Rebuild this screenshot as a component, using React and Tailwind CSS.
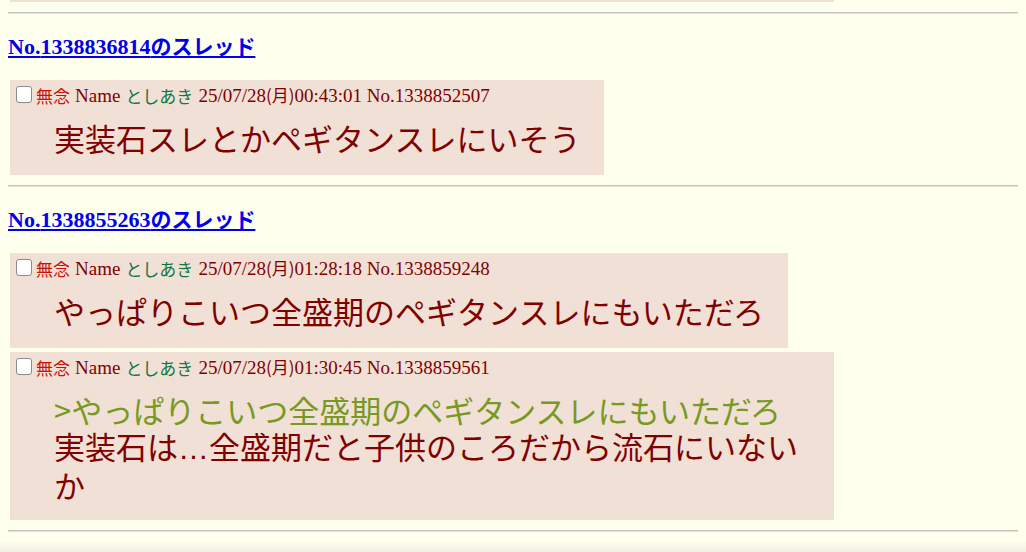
import React from "react";

const serif = "font-['Liberation_Serif','Noto_Sans_CJK_JP',serif]";
const cjk = "font-['Noto_Sans_CJK_JP',sans-serif]";

function Hr() {
  return <div className="h-[2px] border-t border-t-[#c4c4c0] border-b border-b-[#e2e2d6]" />;
}

function Heading({ no }) {
  return (
    <div className="mt-[17px] h-[28px] leading-[28px]">
      <a href="#" className={`${serif} text-[#0000ee] underline font-bold text-[22px]`}>
        No.{no}
        <span className={`${cjk} text-[21px] font-bold`}>のスレッド</span>
      </a>
    </div>
  );
}

function Post({ w, mr, pb, date, no, children }) {
  return (
    <div className={`ml-[2px] bg-[#f0e0d6] pt-[4px] ${pb} ${w}`}>
      <div className={`flex items-center h-[24px] pl-[6px] ${serif} text-[19px] text-[#800000] whitespace-nowrap`}>
        <span className="inline-block w-[16px] h-[17px] rounded-[3px] border border-[#8a8a8a] bg-white mr-[4px] -mt-[4px]" />
        <span className={`${cjk} text-[17px] text-[#cc1105]`}>無念</span>
        <span className="ml-[5px]">Name</span>
        <span className={`${cjk} text-[17px] text-[#117743] ml-[5px]`}>としあき</span>
        <span className="ml-[5px]">
          {date[0]}
          <span className={`${cjk} text-[17px]`}>(月)</span>
          {date[1]} No.{no}
        </span>
      </div>
      <div className={`mt-[12px] ml-[44px] ${mr} ${cjk} text-[31px] leading-[36px] text-[#800000]`}>
        {children}
      </div>
    </div>
  );
}

export default function App() {
  return (
    <div className="min-h-[552px] bg-[#ffffee] flex flex-col">
      <div className="px-[8px] flex-1">
        <div className="ml-[2px] w-[824px] h-[2px] bg-[#f0e0d6]" />
        <div className="mt-[10px]">
          <Hr />
        </div>
        <Heading no="1338836814" />
        <div className="mt-[21px]">
          <Post w="w-[594px]" pb="pb-[19px]" mr="mr-0 whitespace-nowrap" date={["25/07/28", "00:43:01"]} no="1338852507">
            実装石スレとかペギタンスレにいそう
          </Post>
        </div>
        <div className="mt-[10px]">
          <Hr />
        </div>
        <Heading no="1338855263" />
        <div className="mt-[21px] flex flex-col gap-[4px]">
          <Post w="w-[778px]" pb="pb-[19px]" mr="mr-0 whitespace-nowrap" date={["25/07/28", "01:28:18"]} no="1338859248">
            やっぱりこいつ全盛期のペギタンスレにもいただろ
          </Post>
          <Post w="w-[824px]" pb="pb-[17px]" mr="mr-[30px]" date={["25/07/28", "01:30:45"]} no="1338859561">
            <div className="text-[#789922]">&gt;やっぱりこいつ全盛期のペギタンスレにもいただろ</div>
            <div>
              実装石は<span className="font-['Liberation_Sans',sans-serif]">…</span>全盛期だと子供のころだから流石にいないか
            </div>
          </Post>
        </div>
        <div className="mt-[10px]">
          <Hr />
        </div>
      </div>
      <div className="h-[12px] bg-gradient-to-b from-[#ffffee] to-[#f0f0e0]" />
    </div>
  );
}
